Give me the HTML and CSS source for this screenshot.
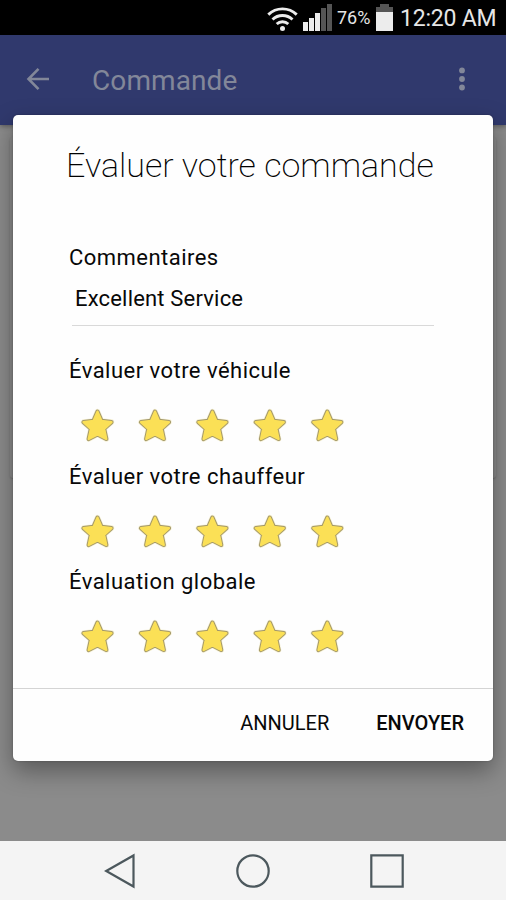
FILE: index.html
```html
<!DOCTYPE html>
<html lang="fr">
<head>
<meta charset="utf-8">
<title>Commande</title>
<link rel="stylesheet" href="styles.css">
</head>
<body>
<svg width="0" height="0" class="defs"><defs>
  <path id="star" d="M20 5.6 L24 14.9 L34 16.1 L26.6 22.8 L28.8 33 L20 28.4 L11.2 33 L13.4 22.8 L6 16.1 L16 14.9 Z"/>
  <g id="rating-star"><use href="#star" class="star-glow"/><use href="#star" class="star-edge"/><use href="#star" class="star-fill"/></g>
</defs></svg>
<div class="screen">
  <header class="status">
    <svg class="wifi" width="32" height="26" viewBox="0 0 32 26"><g fill="none" stroke="#ececec" stroke-width="2.9"><path d="M1.3 8.6A20.5 20.5 0 0 1 29.7 8.6"/><path d="M5.5 13.5A14.5 14.5 0 0 1 25.5 13.5"/><path d="M9.7 18A8.5 8.5 0 0 1 21.3 18"/></g><circle cx="15.5" cy="22.5" r="2.5" fill="#ececec"/></svg>
    <svg class="signal" width="30" height="28" viewBox="0 0 30 28"><g fill="#ececec"><path d="M0 18h5v9H0zM6 14h5v13H6zM12 9h5v18h-5z"/></g><path fill="#555" d="M18 4h5v23h-5zM24 0h5v27h-5z"/></svg>
    <span class="percent">76%</span>
    <svg class="battery" width="17" height="27" viewBox="0 0 17 27"><path fill="#555" d="M0 3h4V0h9v3h4v6H0z"/><path fill="#ececec" d="M0 8h17v19H0z"/></svg>
    <span class="clock">12:20 AM</span>
  </header>
  <nav class="appbar">
    <svg width="24" height="24" viewBox="0 0 24 24" fill="none" stroke="#828799" stroke-width="2.6"><path d="M23 12H2.5M12.5 1.8L2.5 12l10 10.2"/></svg>
    <h1>Commande</h1>
    <svg class="more" width="6" height="24" viewBox="0 0 6 24" fill="#828799"><circle cx="3" cy="3.4" r="2.9"/><circle cx="3" cy="12" r="2.9"/><circle cx="3" cy="20.5" r="2.9"/></svg>
  </nav>
  <main class="content"><div class="card"></div></main>
  <footer class="navbar">
    <svg width="32" height="36" viewBox="0 0 32 36"><path d="M2.2 18L29.5 2.5v31z"/></svg>
    <svg width="36" height="36" viewBox="0 0 36 36"><circle cx="18" cy="18" r="15.7"/></svg>
    <svg width="36" height="36" viewBox="0 0 36 36"><path d="M2.3 2.3h31.4v31.4H2.3z"/></svg>
  </footer>
  <section class="dialog">
    <div class="body">
      <h2>Évaluer votre commande</h2>
      <div class="label comments">Commentaires</div>
      <div class="field">Excellent Service</div>
      <div class="label vehicle">Évaluer votre véhicule</div>
      <svg class="stars" width="288" height="40" viewBox="0 0 288 40"><use href="#rating-star" x="8.5"/><use href="#rating-star" x="66"/><use href="#rating-star" x="123.4"/><use href="#rating-star" x="180.8"/><use href="#rating-star" x="238.3"/></svg>
      <div class="label driver">Évaluer votre chauffeur</div>
      <svg class="stars" width="288" height="40" viewBox="0 0 288 40"><use href="#rating-star" x="8.5"/><use href="#rating-star" x="66"/><use href="#rating-star" x="123.4"/><use href="#rating-star" x="180.8"/><use href="#rating-star" x="238.3"/></svg>
      <div class="label global">Évaluation globale</div>
      <svg class="stars" width="288" height="40" viewBox="0 0 288 40"><use href="#rating-star" x="8.5"/><use href="#rating-star" x="66"/><use href="#rating-star" x="123.4"/><use href="#rating-star" x="180.8"/><use href="#rating-star" x="238.3"/></svg>
    </div>
    <div class="actions"><span class="cancel">ANNULER</span><span class="send">ENVOYER</span></div>
  </section>
</div>
</body>
</html>
```
FILE: styles.css
```css
* { box-sizing: border-box; }
body { margin: 0; font-family: Roboto, sans-serif; color: #080808; }
h1, h2 { margin: 0; font-weight: 400; }
svg { display: block; flex: none; }
.defs { position: absolute; }
.screen { position: relative; width: 506px; height: 900px; display: flex; flex-direction: column; overflow: hidden; background: #8b8b8b; }

.status { height: 35px; flex: none; background: #000; color: #e6e6e6; display: flex; align-items: flex-start; padding-left: 267px; white-space: nowrap; }
.wifi { margin-top: 6px; }
.signal { margin: 4px 0 0 4px; }
.percent { width: 36px; margin: 7px 0 0 4px; font-size: 18px; line-height: 22px; }
.battery { margin: 4px 0 0 3px; }
.clock { margin: 5px 0 0 7px; font-size: 23px; line-height: 28px; letter-spacing: -.2px; }

.appbar { position: relative; height: 90px; flex: none; background: #30396d; color: #828799; display: flex; align-items: center; padding: 0 41px 2px 26px; box-shadow: 0 1px 5px rgba(0,0,0,.4); }
.appbar h1 { margin-left: 42px; padding-top: 3px; font-size: 28px; line-height: 34px; letter-spacing: .1px; }
.more { margin-left: auto; }

.content { flex: 1; padding: 12px 10px; }
.card { height: 341px; background: #8c8c8c; border-radius: 3px; box-shadow: 0 1px 2px rgba(0,0,0,.2); }

.navbar { height: 59px; flex: none; background: #f4f4f4; display: flex; align-items: center; justify-content: space-between; padding: 0 101px 0 104px; fill: none; stroke: #4c585d; stroke-width: 2.2; }

.dialog { position: absolute; left: 13px; top: 115px; width: 480px; height: 646px; background: #fefefe; border-radius: 5px; box-shadow: 0 10px 24px rgba(0,0,0,.36), 0 0 2px rgba(0,0,0,.3); display: flex; flex-direction: column; }
.body { height: 573px; padding: 30px 59px 0 56px; }
.body h2 { margin-left: -3px; font-size: 34px; line-height: 40px; font-weight: 220; color: #000; white-space: nowrap; }
.label, .field { font-size: 22px; line-height: 26px; white-space: nowrap; }
.label { letter-spacing: .47px; }
.comments { margin-top: 60px; }
.field { margin: 15px 0 0 3px; padding-left: 3px; height: 40px; border-bottom: 1px solid #d9d9d9; letter-spacing: .18px; }
.vehicle { margin-top: 32px; }
.driver { margin-top: 18px; }
.global { margin-top: 17px; }
.stars { margin-top: 22px; }
.driver + .stars { margin-top: 21.5px; margin-bottom: .5px; }
.star-glow { fill: none; stroke: #e8d98c; stroke-width: 5.5; stroke-linejoin: round; opacity: .35; }
.star-edge { fill: none; stroke: #a3986a; stroke-width: 4.2; stroke-linejoin: round; }
.star-fill { fill: #fbe056; stroke: #fbe056; stroke-width: 2.3; stroke-linejoin: round; }

.actions { flex: 1; border-top: 1px solid #d4d4d4; display: flex; justify-content: flex-end; align-items: center; padding: 0 29px 4px 0; font-size: 20px; line-height: 24px; }
.send { margin-left: 47px; font-weight: 500; }
```
